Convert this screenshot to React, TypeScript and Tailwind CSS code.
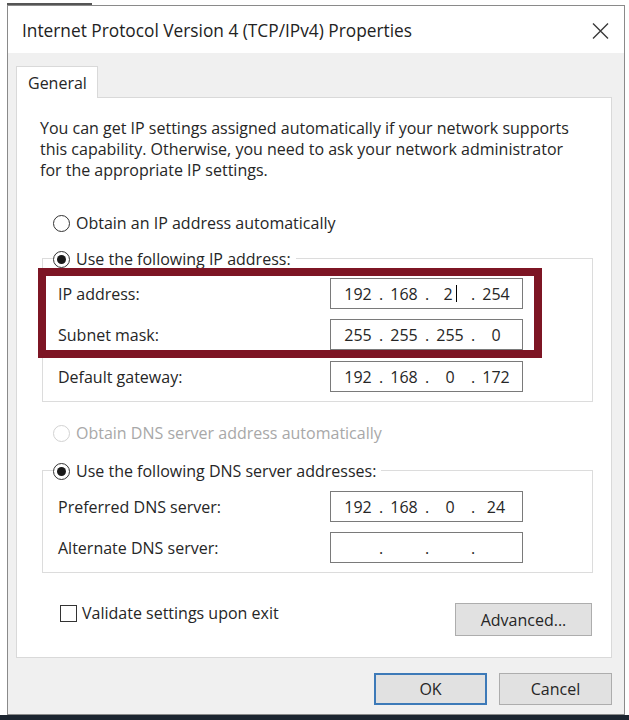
import React from "react";

const Radio = ({ checked, disabled }: { checked?: boolean; disabled?: boolean }) => (
  <span
    className={
      disabled
        ? "flex h-[17px] w-[17px] shrink-0 items-center justify-center rounded-full border-[1.5px] border-[#d2d2d2] bg-white"
        : "flex h-[17px] w-[17px] shrink-0 items-center justify-center rounded-full border-[1.5px] border-[#333333] bg-white"
    }
  >
    {checked && <span className="h-[9px] w-[9px] rounded-full bg-[#1a1a1a]" />}
  </span>
);

const IPBox = ({ parts, cursor }: { parts: string[]; cursor?: number }) => (
  <div className="flex h-[31px] w-[193px] items-center border border-[#7a7a7a] bg-white pl-[7px]">
    {parts.map((p, i) => (
      <React.Fragment key={i}>
        <span className="flex w-[40px] items-center justify-center">
          {p}
          {cursor === i && <span className="ml-[3px] inline-block h-[17px] w-px bg-black" />}
        </span>
        {i < 3 && <span className="w-[6px] text-center">.</span>}
      </React.Fragment>
    ))}
  </div>
);

const Row = ({ label, children, mt }: { label: string; children: React.ReactNode; mt: string }) => (
  <div className={`flex items-center pl-[15px] ${mt}`}>
    <span className="w-[272px] whitespace-nowrap">{label}</span>
    {children}
  </div>
);

export default function App() {
  return (
    <div className="relative h-[720px] w-[629px] overflow-hidden bg-white font-['Open_Sans','Noto_Sans',sans-serif] text-[16px] text-[#262626]">
      <div className="h-[5px] pt-[3px]">
        <div className="ml-[7px] h-[2px] w-[85px] bg-[#555555]" />
      </div>
      <div className="ml-[7px] flex h-[710px] w-[618px] flex-col border border-[#8a8a8a] bg-[#f0f0f0]">
        {/* Title bar */}
        <div className="flex h-[47px] shrink-0 items-center bg-white pl-[14px] pt-[2px]">
          <span className="whitespace-nowrap text-[17.3px] text-[#222222]">
            Internet Protocol Version 4 (TCP/IPv4) Properties
          </span>
          <svg className="ml-auto mr-[15px]" width="17" height="16" viewBox="0 0 17 16">
            <path d="M1 0.5 L16 15.5 M16 0.5 L1 15.5" stroke="#3a3a3a" strokeWidth="1.4" fill="none" />
          </svg>
        </div>

        {/* Body */}
        <div className="flex flex-1 flex-col pl-[8px] pr-[12px] pt-[13px]">
          <div className="relative z-10 -mb-px flex h-[32px] w-[82px] items-center border-x border-t border-[#d9d9d9] bg-white pl-[11px]">
            General
          </div>
          <div className="flex h-[561px] flex-col border border-[#d9d9d9] bg-white">
            <p className="ml-[23px] mt-[20px] whitespace-nowrap leading-[21px]">
              You can get IP settings assigned automatically if your network supports
              <br />
              this capability. Otherwise, you need to ask your network administrator
              <br />
              for the appropriate IP settings.
            </p>

            <div className="ml-[36px] mt-[31px] flex h-[22px] items-center gap-[6px]">
              <Radio />
              <span>Obtain an IP address automatically</span>
            </div>

            <div className="relative ml-[25px] mt-[24px] flex w-[551px] flex-col border border-[#dcdcdc] pb-[9px]">
              <div className="-mt-[11px] ml-[10px] flex h-[22px] items-center gap-[6px] self-start bg-white pr-[5px]">
                <Radio checked />
                <span>Use the following IP address:</span>
              </div>
              <Row label="IP address:" mt="mt-[8px]">
                <IPBox parts={["192", "168", "2", "254"]} cursor={2} />
              </Row>
              <Row label="Subnet mask:" mt="mt-[10px]">
                <IPBox parts={["255", "255", "255", "0"]} />
              </Row>
              <Row label="Default gateway:" mt="mt-[11px]">
                <IPBox parts={["192", "168", "0", "172"]} />
              </Row>
              <div className="absolute left-[-5px] top-[9px] h-[90px] w-[504px] border-[8px] border-[#7d1524]" />
            </div>

            <div className="ml-[36px] mt-[20px] flex h-[22px] items-center gap-[6px] text-[#a8a8a8]">
              <Radio disabled />
              <span>Obtain DNS server address automatically</span>
            </div>

            <div className="ml-[25px] mt-[26px] flex w-[551px] flex-col border border-[#dcdcdc] pb-[9px]">
              <div className="-mt-[11px] ml-[10px] flex h-[22px] items-center gap-[6px] self-start bg-white pr-[5px]">
                <Radio checked />
                <span>Use the following DNS server addresses:</span>
              </div>
              <Row label="Preferred DNS server:" mt="mt-[9px]">
                <IPBox parts={["192", "168", "0", "24"]} />
              </Row>
              <Row label="Alternate DNS server:" mt="mt-[10px]">
                <IPBox parts={["", "", "", ""]} />
              </Row>
            </div>

            <div className="mt-[30px] flex items-start">
              <div className="ml-[43px] flex h-[20px] items-center gap-[5px]">
                <span className="h-[17px] w-[17px] border-[1.5px] border-[#333333] bg-white" />
                <span>Validate settings upon exit</span>
              </div>
              <div className="ml-auto mr-[19px] flex h-[33px] w-[137px] items-center justify-center border border-[#adadad] bg-[#e1e1e1]">
                Advanced...
              </div>
            </div>
          </div>

          <div className="mt-[15px] flex justify-end gap-[12px]">
            <div className="flex h-[32px] w-[113px] items-center justify-center border-2 border-[#3d7ab8] bg-[#e1e1e1]">
              OK
            </div>
            <div className="flex h-[32px] w-[113px] items-center justify-center border border-[#adadad] bg-[#e1e1e1]">
              Cancel
            </div>
          </div>
        </div>
      </div>
      <div className="h-[5px] bg-[#1c2530]" />
    </div>
  );
}
